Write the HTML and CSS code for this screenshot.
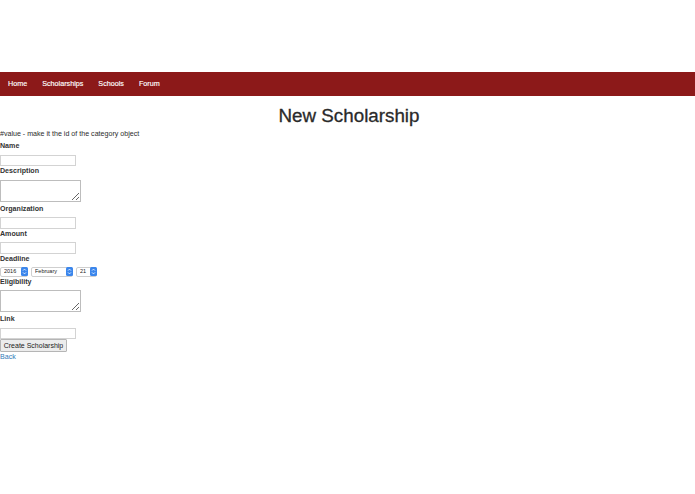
FILE: index.html
```html
<!DOCTYPE html>
<html>
<head>
<meta charset="utf-8">
<title>New Scholarship</title>
<link rel="stylesheet" href="styles.css">
</head>
<body>
<div class="page">
  <nav class="navbar">
    <a class="nav-link" href="#">Home</a>
    <a class="nav-link" href="#">Scholarships</a>
    <a class="nav-link" href="#">Schools</a>
    <a class="nav-link" href="#">Forum</a>
  </nav>
  <h1 class="title">New Scholarship</h1>
  <p class="note">#value - make it the id of the category object</p>
  <form class="form">
    <div class="field">
      <label class="label">Name</label>
      <input class="text-input" type="text">
    </div>
    <div class="field">
      <label class="label">Description</label>
      <textarea class="text-area"></textarea>
    </div>
    <div class="field">
      <label class="label">Organization</label>
      <input class="text-input" type="text">
    </div>
    <div class="field">
      <label class="label">Amount</label>
      <input class="text-input" type="text">
    </div>
    <div class="field">
      <label class="label">Deadline</label>
      <div class="date-row">
        <span class="select-wrap year">
          <select class="select"><option>2016</option></select>
          <svg class="stepper" viewBox="0 0 7 9"><rect x="0" y="0" width="7" height="9" rx="1.5" fill="#3b86ec"/><path d="M2 3.6 L3.5 2.1 L5 3.6 M2 5.4 L3.5 6.9 L5 5.4" fill="none" stroke="#fff" stroke-width="0.8"/></svg>
        </span>
        <span class="select-wrap month">
          <select class="select"><option>February</option></select>
          <svg class="stepper" viewBox="0 0 7 9"><rect x="0" y="0" width="7" height="9" rx="1.5" fill="#3b86ec"/><path d="M2 3.6 L3.5 2.1 L5 3.6 M2 5.4 L3.5 6.9 L5 5.4" fill="none" stroke="#fff" stroke-width="0.8"/></svg>
        </span>
        <span class="select-wrap day">
          <select class="select"><option>21</option></select>
          <svg class="stepper" viewBox="0 0 7 9"><rect x="0" y="0" width="7" height="9" rx="1.5" fill="#3b86ec"/><path d="M2 3.6 L3.5 2.1 L5 3.6 M2 5.4 L3.5 6.9 L5 5.4" fill="none" stroke="#fff" stroke-width="0.8"/></svg>
        </span>
      </div>
    </div>
    <div class="field">
      <label class="label">Eligibility</label>
      <textarea class="text-area"></textarea>
    </div>
    <div class="field">
      <label class="label">Link</label>
      <input class="text-input" type="text">
    </div>
    <button class="submit" type="button">Create Scholarship</button>
  </form>
  <a class="back" href="#">Back</a>
</div>
</body>
</html>
```
FILE: styles.css
```css
html, body {
  margin: 0;
  padding: 0;
  background: #fff;
}
body {
  font-family: "Liberation Sans", Arial, sans-serif;
  font-size: 7.1px;
  line-height: 10px;
  color: #2b2b2b;
}
.page {
  padding-top: 72px;
}
.navbar {
  height: 24px;
  background: #8c1919;
  display: flex;
  align-items: center;
  padding-left: 0.5px;
}
.nav-link {
  color: #fff;
  text-decoration: none;
  padding: 0 7.5px;
  font-size: 7.2px;
  line-height: 10px;
  -webkit-text-stroke: 0.15px #fff;
}
.title {
  margin: 7px 0 1px;
  padding-left: 3px;
  font-size: 18.8px;
  line-height: 25px;
  font-weight: normal;
  text-align: center;
  color: #2a2a2a;
  -webkit-text-stroke: 0.3px #2a2a2a;
}
.note {
  margin: 0 0 2px;
}
.form {
  margin: 0;
}
.field {
  margin: 0;
}
.label {
  display: block;
  font-weight: bold;
  line-height: 10px;
  margin-bottom: 3.5px;
  color: #333;
}
.text-input {
  display: block;
  box-sizing: border-box;
  width: 75.5px;
  height: 11.5px;
  margin: 0;
  padding: 0 2px;
  border: 1px solid #d3d3d3;
  font-size: 7px;
  background: #fff;
  outline: none;
}
.text-area {
  display: block;
  box-sizing: border-box;
  width: 81px;
  height: 22px;
  margin: 0 0 2px;
  padding: 1px 2px;
  border: 1px solid #bdbdbd;
  font-size: 7px;
  resize: both;
  background: #fff;
}
.date-row {
  display: flex;
  gap: 3px;
  height: 9.5px;
}
.select-wrap {
  position: relative;
  display: block;
  height: 9.5px;
}
.select-wrap.year { width: 28px; }
.select-wrap.month { width: 42px; }
.select-wrap.day { width: 21px; }
.select {
  -webkit-appearance: none;
  appearance: none;
  display: block;
  box-sizing: border-box;
  width: 100%;
  height: 9.5px;
  margin: 0;
  padding: 0 0 0 3px;
  border: 1px solid #cfcfcf;
  border-radius: 2px;
  background: #fff;
  font-family: "Liberation Sans", Arial, sans-serif;
  font-size: 5.5px;
  line-height: 7.5px;
  color: #222;
}
.stepper {
  position: absolute;
  right: 0.5px;
  top: 0.25px;
  width: 7px;
  height: 9px;
}
.submit {
  display: block;
  box-sizing: border-box;
  width: 67px;
  height: 13px;
  margin: 0;
  padding: 0;
  border: 1px solid #b5b5b5;
  border-radius: 1px;
  background: #ececec;
  font-family: "Liberation Sans", Arial, sans-serif;
  font-size: 7px;
  color: #222;
}
.back {
  display: block;
  color: #337ab7;
  text-decoration: none;
  line-height: 10px;
}
```
